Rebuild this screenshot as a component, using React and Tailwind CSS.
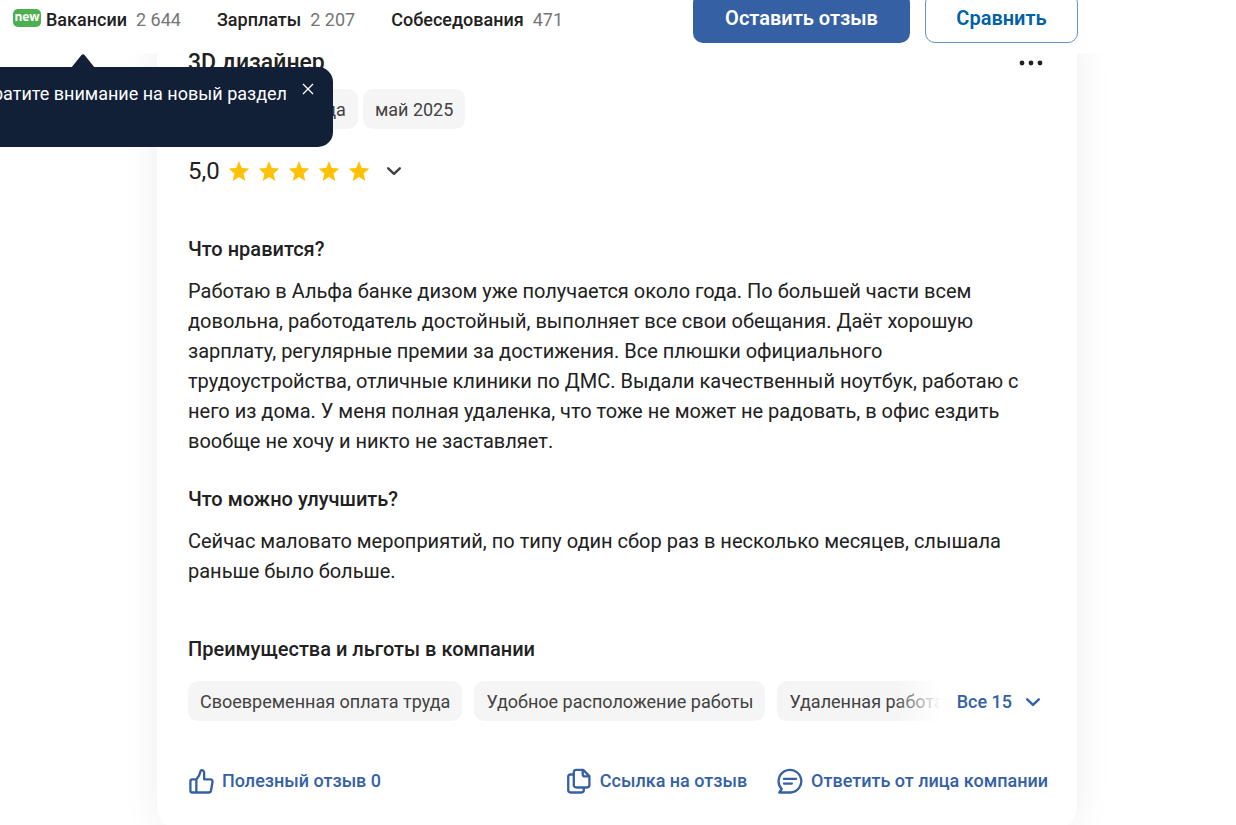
const tabs = [
  { label: "Вакансии", count: "2 644", isNew: true },
  { label: "Зарплаты", count: "2 207" },
  { label: "Собеседования", count: "471" },
];

const perks = [
  "Своевременная оплата труда",
  "Удобное расположение работы",
  "Удаленная работа",
];

function Chevron() {
  return (
    <svg viewBox="0 0 24 24" className="size-6" fill="none" stroke="currentColor" strokeWidth="2.4" strokeLinecap="round" strokeLinejoin="round" aria-hidden="true">
      <path d="M6.200 9.300l5.800 5.600 5.800-5.600" />
    </svg>
  );
}

function Star() {
  return (
    <svg viewBox="0 0 24 24" className="size-6" fill="#ffc107" aria-hidden="true">
      <path d="M12 18.1L18.300 22l-1.700-7.300L22.200 9.600l-7.400-.6L12 2 9.200 9l-7.400.6 5.600 5.100L5.700 22z" />
    </svg>
  );
}

function ThumbIcon() {
  return (
    <svg viewBox="0 0 28 28" className="size-[26px]" fill="none" stroke="currentColor" strokeWidth="2.500" strokeLinejoin="round" strokeLinecap="round" aria-hidden="true">
      <path d="M9 12.300H4.600a2 2 0 0 0-2 2v10.100a2 2 0 0 0 2 2h17.600a2.600 2.600 0 0 0 2.600-2.200l1.600-9.200a2.400 2.400 0 0 0-2.400-2.800h-6.600V5.600c0-2-1-3.300-2.600-3.300-.8 0-1.200.6-1.400 1.400C12.700 7.500 11.500 9.600 9 12.300zM9 12.300v14" />
    </svg>
  );
}

function CopyIcon() {
  return (
    <svg viewBox="0 0 28 28" className="size-[26px]" fill="none" stroke="currentColor" strokeWidth="2.500" strokeLinejoin="round" strokeLinecap="round" aria-hidden="true">
      <path d="M18.500 2H11a2.600 2.600 0 0 0-2.600 2.600v13.800A2.600 2.600 0 0 0 11 21h11.600a2.600 2.600 0 0 0 2.600-2.600V8.700zM18 2.400v4.200a2.400 2.400 0 0 0 2.400 2.400h4.400M8 7H5a2.600 2.600 0 0 0-2.600 2.600v14.200A2.600 2.600 0 0 0 5 26.400h11.600a2.600 2.600 0 0 0 2.600-2.600V21.500" />
    </svg>
  );
}

function ReplyIcon() {
  return (
    <svg viewBox="0 0 28 28" className="size-[26px]" fill="none" stroke="currentColor" strokeWidth="2.500" strokeLinejoin="round" strokeLinecap="round" aria-hidden="true">
      <path d="M14.300 26.400H2.400l2.700-3.800A12.200 12.200 0 1 1 14.300 26.400zM7.500 11.800h13M7.500 16.800h8.500" />
    </svg>
  );
}

function Chip({ children }) {
  return (
    <span className="flex h-10 shrink-0 items-center rounded-[10px] bg-[#f5f5f5] px-3 pt-[2px] text-lg whitespace-nowrap text-[#424242]">
      {children}
    </span>
  );
}

function Hint() {
  return (
    <div role="tooltip" className="absolute top-full left-[70px] w-[500px] -translate-x-1/2 pt-5">
      <svg viewBox="0 0 24 14" className="mx-auto -mb-px h-[14px] w-6" fill="#122037" aria-hidden="true">
        <path d="M0 14L10.500 1Q12-.6 13.500 1L24 14z" />
      </svg>
      <div className="flex h-20 items-start justify-end gap-3 rounded-[15px] bg-[#122037] pt-[13px] pr-4 text-white">
        <p className="text-lg whitespace-nowrap">Обратите внимание на новый раздел</p>
        <button type="button" aria-label="Закрыть" className="flex size-[18px] items-center justify-center">
          <svg viewBox="0 0 12 12" className="size-3" fill="none" stroke="currentColor" strokeWidth="1.300" aria-hidden="true">
            <path d="M1 1l10 10M11 1L1 11" />
          </svg>
        </button>
      </div>
    </div>
  );
}

export default function App() {
  return (
    <div className="h-screen overflow-hidden bg-white font-['Roboto',sans-serif] text-[#212121]">
      <header className="relative z-10 flex h-[53px] bg-white pl-[13px]">
        <nav className="flex items-start gap-9 pt-[6px]">
          {tabs.map((tab) => (
            <div key={tab.label} className="relative flex h-7 items-center gap-[5px]">
              {tab.isNew && (
                <span className="mb-1 flex h-[18px] w-7 items-center justify-center rounded-[5px] bg-[#4caf50] pb-[2px] font-['Open_Sans',sans-serif] text-xs font-bold text-white">
                  new
                </span>
              )}
              <a href="#" className="flex items-center gap-[9px] text-lg whitespace-nowrap">
                <span className="font-medium">{tab.label}</span>
                <span className="text-[#757575]">{tab.count}</span>
              </a>
              {tab.isNew && <Hint />}
            </div>
          ))}
        </nav>
        <div className="ml-auto flex h-[43px] items-end gap-[15px] overflow-hidden pr-[158px]">
          <button type="button" className="h-[50px] w-[217px] shrink-0 rounded-[10px] bg-[#3561a4] text-xl font-semibold text-white">
            Оставить отзыв
          </button>
          <button type="button" className="h-[50px] w-[153px] shrink-0 rounded-[10px] border border-[#6b91cf] bg-white text-xl font-semibold text-[#0060a8]">
            Сравнить
          </button>
        </div>
      </header>

      <main className="pr-[159px] pl-[157px]">
        <article className="-mt-6 rounded-[20px] bg-white pt-[18px] pr-[29px] pb-8 pl-[31px] shadow-[0_0_38px_rgba(0,0,0,0.07)]">
          <div className="flex items-center justify-between">
            <h2 className="pt-px text-[23px] leading-[30px] font-medium">3D дизайнер</h2>
            <button type="button" aria-label="Действия" className="flex h-[30px] w-[34px] items-center justify-center">
              <svg viewBox="0 0 24 6" className="h-[6px] w-6 shrink-0" fill="currentColor" aria-hidden="true">
                <circle cx="3" cy="3" r="2.400" />
                <circle cx="12" cy="3" r="2.400" />
                <circle cx="21" cy="3" r="2.400" />
              </svg>
            </button>
          </div>

          <div className="mt-[11px] flex gap-[5px]">
            <Chip>Работаю 1-2 года</Chip>
            <Chip>май 2025</Chip>
          </div>

          <div className="mt-[27px] flex h-[30px] items-center">
            <span className="text-2xl">5,0</span>
            <div className="ml-[7px] flex gap-[6px]" role="img" aria-label="5 из 5">
              <Star />
              <Star />
              <Star />
              <Star />
              <Star />
            </div>
            <button type="button" aria-label="Показать оценки" className="ml-[11px] text-[#424242]">
              <Chevron />
            </button>
          </div>

          <h3 className="mt-12 text-xl leading-[30px] font-medium">Что нравится?</h3>
          <p className="mt-3 text-xl leading-[30px]">
            Работаю в Альфа банке дизом уже получается около года. По большей части всем довольна, работодатель достойный, выполняет все свои обещания. Даёт хорошую зарплату, регулярные премии за достижения. Все плюшки официального трудоустройства, отличные клиники по ДМС. Выдали качественный ноутбук, работаю с него из дома. У меня полная удаленка, что тоже не может не радовать, в офис ездить вообще не хочу и никто не заставляет.
          </p>

          <h3 className="mt-7 text-xl leading-[30px] font-medium">Что можно улучшить?</h3>
          <p className="mt-3 text-xl leading-[30px]">
            Сейчас маловато мероприятий, по типу один сбор раз в несколько месяцев, слышала раньше было больше.
          </p>

          <h3 className="mt-12 text-xl leading-[30px] font-medium">Преимущества и льготы в компании</h3>
          <div className="mt-[17px] flex items-center">
            <div className="relative flex min-w-0 flex-1 gap-3 overflow-hidden">
              {perks.map((perk) => (
                <Chip key={perk}>{perk}</Chip>
              ))}
              <span className="absolute inset-y-0 right-0 w-12 bg-linear-to-r from-white/0 to-white" />
            </div>
            <button type="button" className="ml-4 flex items-center gap-[9px] pt-[2px] pr-[3px] text-lg font-medium text-[#3561a4]">
              Все 15
              <Chevron />
            </button>
          </div>

          <div className="mt-[45px] flex h-[30px] items-center text-lg font-medium whitespace-nowrap text-[#3561a4]">
            <button type="button" className="flex items-center gap-2">
              <ThumbIcon />
              Полезный отзыв 0
            </button>
            <div className="ml-auto flex gap-[30px]">
              <button type="button" className="flex items-center gap-2">
                <CopyIcon />
                Ссылка на отзыв
              </button>
              <button type="button" className="flex items-center gap-2">
                <ReplyIcon />
                Ответить от лица компании
              </button>
            </div>
          </div>
        </article>
      </main>
    </div>
  );
}
